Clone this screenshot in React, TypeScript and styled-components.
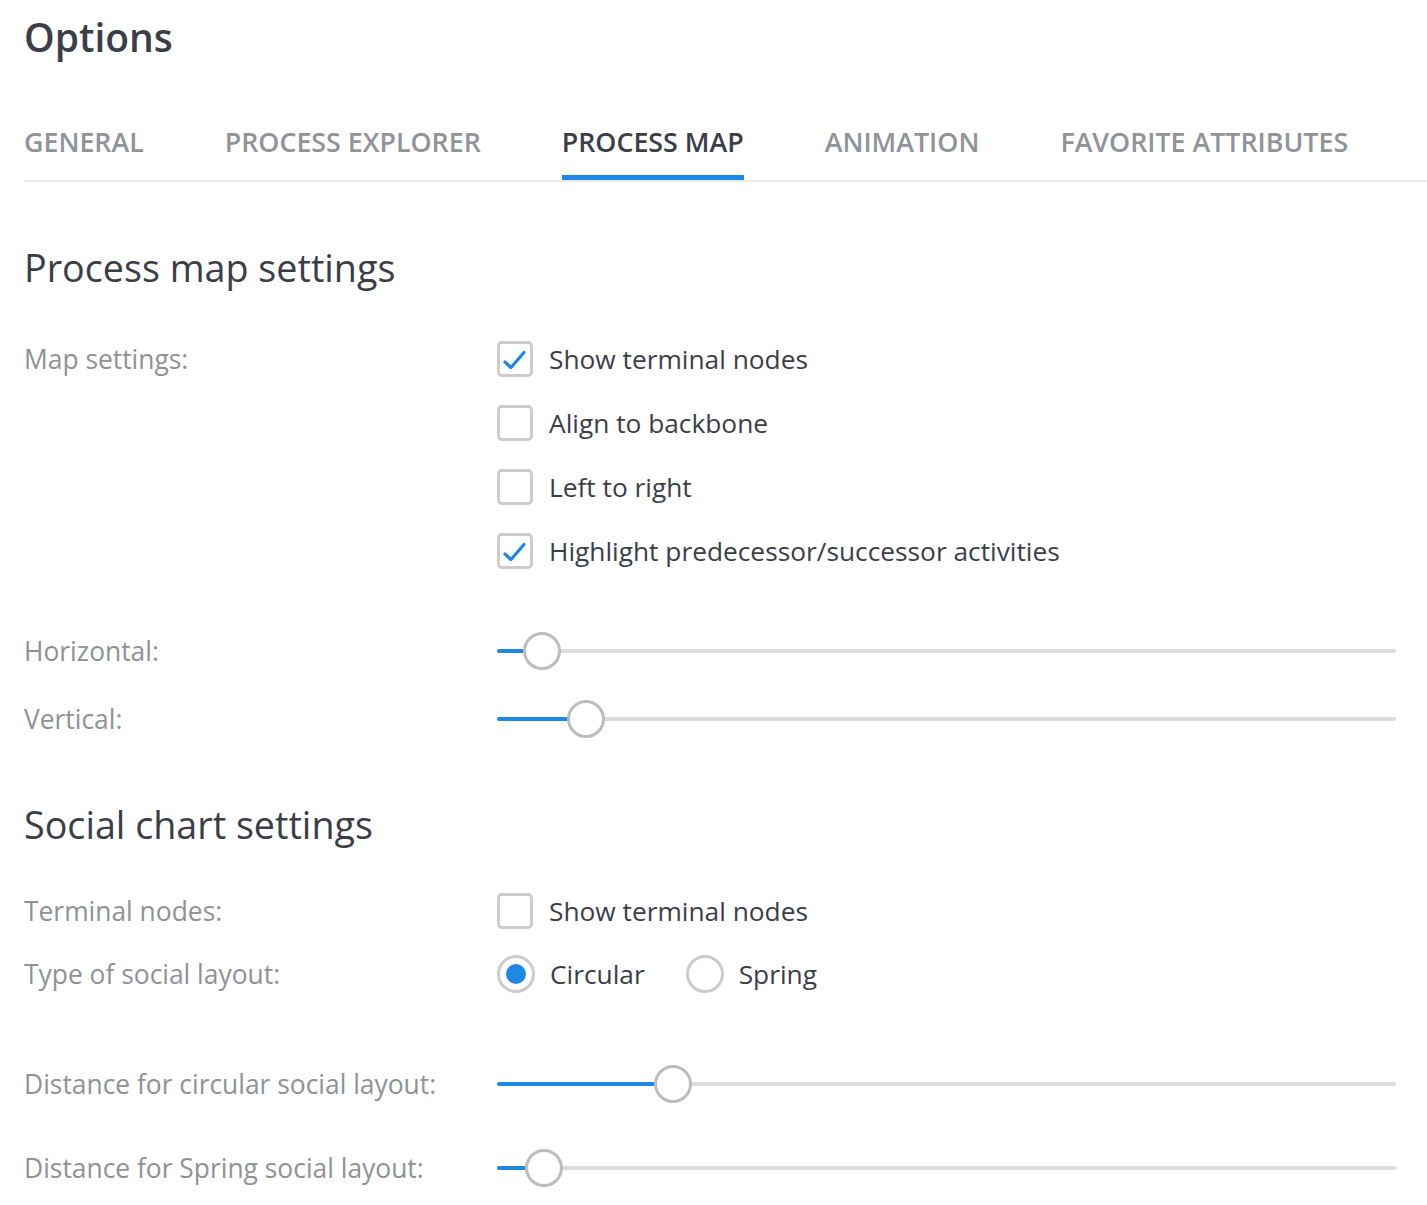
import React from "react";
import styled, { createGlobalStyle } from "styled-components";

const GlobalStyle = createGlobalStyle`
  html, body { margin: 0; padding: 0; background: #ffffff; }
  body { font-family: "Open Sans", "Noto Sans", sans-serif; color: #3b3e47; }
  * { box-sizing: border-box; }
`;

const Page = styled.div`
  padding: 13px 0 20px 24px;
`;

const Title = styled.h1`
  margin: 0;
  font-size: 39px;
  line-height: 48px;
  font-weight: 600;
  color: #3b3e47;
`;

const TabBar = styled.div`
  margin-top: 64px;
  display: flex;
  gap: 81px;
  border-bottom: 2px solid #e8e8e8;
`;

const Tab = styled.div<{ $active?: boolean }>`
  font-size: 26.8px;
  line-height: 34px;
  font-weight: 600;
  text-transform: uppercase;
  color: ${(p) => (p.$active ? "#3b3e47" : "#909398")};
  padding-bottom: 16px;
  border-bottom: 5px solid ${(p) => (p.$active ? "#1e88e5" : "transparent")};
  white-space: nowrap;
`;

const Content = styled.div`
  padding-right: 31px;
`;

const Heading = styled.h2<{ $gap: number }>`
  margin: ${(p) => p.$gap}px 0 0 0;
  font-size: 37.7px;
  line-height: 46px;
  font-weight: 400;
  color: #3b3e47;
`;

const Row = styled.div<{ $gap: number }>`
  margin-top: ${(p) => p.$gap}px;
  display: grid;
  grid-template-columns: 473px 1fr;
  align-items: start;
`;

const Label = styled.div<{ $h: number }>`
  font-size: 26.4px;
  line-height: ${(p) => p.$h}px;
  color: #8e9297;
  white-space: nowrap;
`;

const CheckList = styled.div`
  display: flex;
  flex-direction: column;
  gap: 28px;
`;

const CheckRow = styled.label`
  display: flex;
  align-items: center;
  gap: 16px;
  height: 36px;
`;

const Box = styled.span`
  width: 36px;
  height: 36px;
  border: 3px solid #cccccc;
  border-radius: 5px;
  display: flex;
  align-items: center;
  justify-content: center;
  flex: none;
  background: #fff;
`;

const OptionText = styled.span`
  font-size: 26.3px;
  line-height: 36px;
  color: #3b3e47;
  white-space: nowrap;
`;

const RadioGroup = styled.div`
  display: flex;
  align-items: center;
  gap: 41px;
  height: 38px;
`;

const RadioOption = styled.label`
  display: flex;
  align-items: center;
  gap: 15px;
`;

const RadioCircle = styled.span<{ $checked?: boolean }>`
  width: 38px;
  height: 38px;
  border-radius: 50%;
  border: 3px solid #cccccc;
  display: flex;
  align-items: center;
  justify-content: center;
  flex: none;
  &::after {
    content: "";
    width: 20px;
    height: 20px;
    border-radius: 50%;
    background: ${(p) => (p.$checked ? "#1e88e5" : "transparent")};
  }
`;

const SliderWrap = styled.div`
  position: relative;
  height: 38px;
  display: flex;
  align-items: center;
`;

const Track = styled.div`
  width: 100%;
  height: 4px;
  border-radius: 2px;
  background: #dcdcdc;
  overflow: hidden;
`;

const Fill = styled.div`
  height: 100%;
  background: #1e88e5;
`;

const Thumb = styled.div`
  position: absolute;
  top: 0;
  width: 38px;
  height: 38px;
  margin-left: -19px;
  border-radius: 50%;
  border: 3px solid #bdbdbd;
  background: #ffffff;
`;

const Check = () => (
  <svg width="30" height="30" viewBox="0 0 30 30" fill="none">
    <path d="M5 18 L11 23.5 L24 8.5" stroke="#1e88e5" strokeWidth="3.2" strokeLinecap="round" strokeLinejoin="round" />
  </svg>
);

const CheckItem = ({ text, checked }: { text: string; checked?: boolean }) => (
  <CheckRow>
    <Box>{checked && <Check />}</Box>
    <OptionText>{text}</OptionText>
  </CheckRow>
);

const Slider = ({ px }: { px: number }) => (
  <SliderWrap>
    <Track>
      <Fill style={{ width: `${px}px` }} />
    </Track>
    <Thumb style={{ left: `${px}px` }} />
  </SliderWrap>
);

const tabs = ["General", "Process explorer", "Process map", "Animation", "Favorite attributes"];

export default function App() {
  return (
    <>
      <GlobalStyle />
      <Page>
        <Title>Options</Title>
        <TabBar>
          {tabs.map((t) => (
            <Tab key={t} $active={t === "Process map"}>
              {t}
            </Tab>
          ))}
        </TabBar>
        <Content>
          <Heading $gap={63}>Process map settings</Heading>
          <Row $gap={50}>
            <Label $h={36}>Map settings:</Label>
            <CheckList>
              <CheckItem text="Show terminal nodes" checked />
              <CheckItem text="Align to backbone" />
              <CheckItem text="Left to right" />
              <CheckItem text="Highlight predecessor/successor activities" checked />
            </CheckList>
          </Row>
          <Row $gap={63}>
            <Label $h={38}>Horizontal:</Label>
            <Slider px={45} />
          </Row>
          <Row $gap={30}>
            <Label $h={38}>Vertical:</Label>
            <Slider px={89} />
          </Row>
          <Heading $gap={64}>Social chart settings</Heading>
          <Row $gap={45}>
            <Label $h={36}>Terminal nodes:</Label>
            <CheckList>
              <CheckItem text="Show terminal nodes" />
            </CheckList>
          </Row>
          <Row $gap={26}>
            <Label $h={38}>Type of social layout:</Label>
            <RadioGroup>
              <RadioOption>
                <RadioCircle $checked />
                <OptionText>Circular</OptionText>
              </RadioOption>
              <RadioOption>
                <RadioCircle />
                <OptionText>Spring</OptionText>
              </RadioOption>
            </RadioGroup>
          </Row>
          <Row $gap={72}>
            <Label $h={38}>Distance for circular social layout:</Label>
            <Slider px={176} />
          </Row>
          <Row $gap={46}>
            <Label $h={38}>Distance for Spring social layout:</Label>
            <Slider px={47} />
          </Row>
        </Content>
      </Page>
    </>
  );
}
